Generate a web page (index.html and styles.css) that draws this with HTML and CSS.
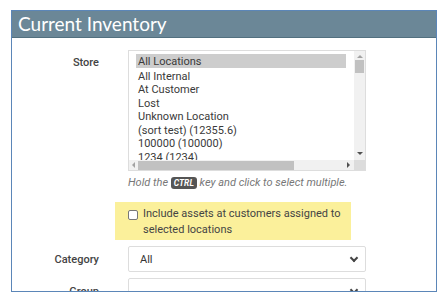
FILE: index.html
```html
<!DOCTYPE html>
<html>
<head>
  <meta charset="UTF-8">
  <title>Current Inventory</title>
  <link rel="stylesheet" href="styles.css">
</head>
<body>

<div class="panel">
  <div class="panel-title">Current Inventory</div>

  <div class="panel-body">
    <div class="row">
      <div class="label">Store</div>
      <div class="control">
        <div class="listbox">
          <div class="list-items">
            <div class="item selected">All Locations</div>
            <div class="item">All Internal</div>
            <div class="item">At Customer</div>
            <div class="item">Lost</div>
            <div class="item">Unknown Location</div>
            <div class="item">(sort test) (12355.6)</div>
            <div class="item">100000 (100000)</div>
            <div class="item">1234 (1234)</div>
          </div>
          <div class="vscroll">
            <span class="arrow up"></span>
            <span class="vthumb"></span>
            <span class="arrow down"></span>
          </div>
          <div class="hscroll">
            <span class="arrow left"></span>
            <span class="hthumb"></span>
            <span class="arrow right"></span>
          </div>
          <div class="corner"></div>
        </div>
        <div class="hint">Hold the <span class="key">CTRL</span> key and click to select multiple.</div>
        <div class="highlight">
          <span class="checkbox"></span>
          <span>Include assets at customers assigned to selected locations</span>
        </div>
      </div>
    </div>

    <div class="row select-row">
      <div class="label">Category</div>
      <div class="control">
        <div class="select">All <span class="chevron"></span></div>
      </div>
    </div>

    <div class="row select-row">
      <div class="label">Group</div>
      <div class="control">
        <div class="select"><span></span><span class="chevron"></span></div>
      </div>
    </div>
  </div>
</div>

</body>
</html>
```

FILE: styles.css
```css
body {
  margin: 0;
  background: #fff;
  font-family: Roboto, "Liberation Sans", sans-serif;
  font-size: 11px;
  color: #444;
}

.panel {
  margin: 10px 0 0 11px;
  width: 424px;
  height: 280px;
  border: 1px solid #5b86b8;
  overflow: hidden;
}

.panel-title {
  height: 26px;
  background: #6b8797;
  border-bottom: 1px solid #52707f;
  color: #fff;
  font-family: Lato, "Open Sans", sans-serif;
  font-size: 19px;
  line-height: 26px;
  padding-left: 6px;
}

.panel-body {
  padding-top: 12px;
}

.row {
  display: flex;
}

.label {
  width: 87px;
  padding-right: 17px;
  text-align: right;
  font-weight: 500;
  color: #444;
  padding-top: 6px;
}

.control {
  margin-left: 12px;
  width: 238px;
}

/* fake multi-select list */
.listbox {
  height: 119px;
  border: 1px solid #ddd;
  display: grid;
  grid-template-columns: 1fr 11px;
  grid-template-rows: 1fr 10px;
  overflow: hidden;
}

.list-items {
  padding: 3px 8px 0 7px;
  overflow: hidden;
  color: #3a3a3a;
}

.item {
  height: 13.5px;
  line-height: 15px;
  padding-left: 2px;
  white-space: nowrap;
}

.item.selected {
  height: 14px;
  line-height: 16px;
  margin-bottom: 0.5px;
  background: #cdcdcd;
}

.vscroll {
  background: #f1f1f1;
  display: flex;
  flex-direction: column;
  align-items: center;
}

.vthumb {
  width: 9px;
  height: 13px;
  background: #c1c1c1;
  margin-top: 2px;
}

.hscroll {
  background: #f1f1f1;
  display: flex;
  align-items: center;
}

.hthumb {
  width: 156px;
  height: 9px;
  background: #c1c1c1;
  margin-left: 3px;
}

.corner {
  background: #dcdcdc;
}

.arrow {
  width: 0;
  height: 0;
  border: 3px solid transparent;
}

.arrow.up {
  border-bottom-color: #a3a3a3;
  border-top-width: 0;
  margin-top: 4px;
}

.arrow.down {
  border-top-color: #505050;
  border-bottom-width: 0;
  margin-top: auto;
  margin-bottom: 5px;
}

.arrow.left {
  border-right-color: #a3a3a3;
  border-left-width: 0;
  margin-left: 3px;
}

.arrow.right {
  border-left-color: #505050;
  border-right-width: 0;
  margin-left: auto;
  margin-right: 4px;
}

.hint {
  margin-top: 5px;
  color: #777;
  font-style: italic;
  white-space: nowrap;
  line-height: 14px;
}

.key {
  display: inline-block;
  background: #555;
  color: #fff;
  font-weight: bold;
  font-size: 8.5px;
  line-height: 12px;
  padding: 0 3px;
  border-radius: 3px;
}

.highlight {
  margin: 12px 0 0 -13px;
  width: 223px;
  height: 38px;
  background: #fbf09b;
  padding: 0 0 0 13px;
  display: flex;
  align-items: flex-start;
  gap: 5px;
  line-height: 16px;
  color: #444;
  box-sizing: content-box;
}

.highlight span:last-child {
  padding-top: 4px;
}

.checkbox {
  flex: none;
  width: 8px;
  height: 8px;
  border: 1px solid #777;
  border-radius: 2px;
  margin-top: 8px;
  background: #fff;
}

.select-row {
  margin-top: 6px;
}

.select-row .label {
  padding-top: 7px;
}

.select {
  height: 24px;
  border: 1px solid #ddd;
  border-radius: 2px;
  padding: 0 8px 0 11px;
  display: flex;
  align-items: center;
  justify-content: space-between;
  color: #333;
}

.chevron {
  width: 4px;
  height: 4px;
  border-right: 2px solid #444;
  border-bottom: 2px solid #444;
  transform: rotate(45deg);
  margin-top: -3px;
}
```
